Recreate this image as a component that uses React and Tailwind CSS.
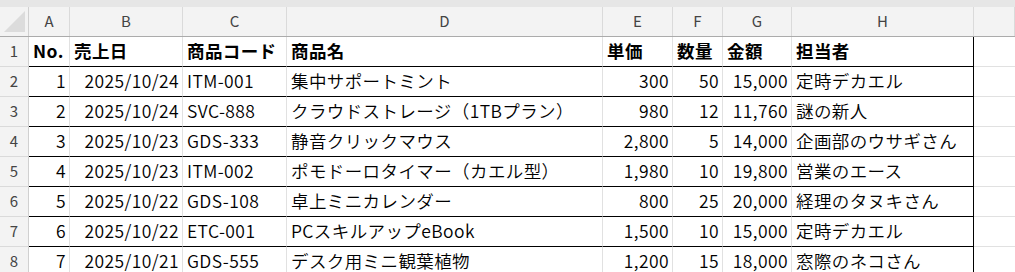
import React from "react";

const cols = ["A", "B", "C", "D", "E", "F", "G", "H", ""];

const header = ["No.", "売上日", "商品コード", "商品名", "単価", "数量", "金額", "担当者"];

// right-aligned columns for data rows
const numeric = [true, true, false, false, true, true, true, false];

const rows = [
  ["1", "2025/10/24", "ITM-001", "集中サポートミント", "300", "50", "15,000", "定時デカエル"],
  ["2", "2025/10/24", "SVC-888", "クラウドストレージ（1TBプラン）", "980", "12", "11,760", "謎の新人"],
  ["3", "2025/10/23", "GDS-333", "静音クリックマウス", "2,800", "5", "14,000", "企画部のウサギさん"],
  ["4", "2025/10/23", "ITM-002", "ポモドーロタイマー（カエル型）", "1,980", "10", "19,800", "営業のエース"],
  ["5", "2025/10/22", "GDS-108", "卓上ミニカレンダー", "800", "25", "20,000", "経理のタヌキさん"],
  ["6", "2025/10/22", "ETC-001", "PCスキルアップeBook", "1,500", "10", "15,000", "定時デカエル"],
  ["7", "2025/10/21", "GDS-555", "デスク用ミニ観葉植物", "1,200", "15", "18,000", "窓際のネコさん"],
];

const grid =
  "grid grid-cols-[29px_41px_113px_104px_316px_70px_50px_69px_182px_1fr]";

function RowHead({ n }) {
  return (
    <div className="h-[30px] flex items-center justify-center bg-[#f3f3f3] border-r border-r-[#d0d0d0] border-b border-b-[#dadada] text-[15px] text-[#444]">
      {n}
    </div>
  );
}

function Cell({ children, right, bold, last, edge }) {
  return (
    <div
      className={
        "h-[30px] flex items-center whitespace-nowrap overflow-hidden text-[17.5px] tracking-[0.4px] text-black " +
        (right ? "justify-end pr-[3px] " : "pl-[4px] ") +
        (bold ? "font-bold " : "font-[350] ") +
        (edge ? "border-r border-r-black " : "border-r border-r-[#e1e1e1] ") +
        (last ? "border-b border-b-[#e1e1e1]" : "border-b border-b-black")
      }
    >
      {children}
    </div>
  );
}

function Blank() {
  return <div className="h-[30px] border-b border-b-[#e1e1e1]" />;
}

export default function App() {
  return (
    <div
      className="w-[1015px] h-[272px] overflow-hidden bg-white"
      style={{ fontFamily: '"Noto Sans CJK JP", "Noto Sans", sans-serif' }}
    >
      <div className="h-[7px] bg-[#e6e6e6]" />
      <div className={grid + " h-[30px] bg-[#f3f3f3] border-b border-b-[#ababab]"}>
        <div className="relative border-r border-r-[#d0d0d0]">
          <svg className="absolute left-[4px] top-[4px]" width="22" height="21" viewBox="0 0 22 21">
            <polygon points="21,0 21,21 0,21" fill="#dcdcdc" />
          </svg>
        </div>
        {cols.map((c, i) => (
          <div
            key={i}
            className="flex items-center justify-center border-r border-r-[#dadada] text-[15px] text-[#444]"
          >
            {c}
          </div>
        ))}
      </div>
      <div className={grid}>
        <RowHead n={1} />
        {header.map((h, i) => (
          <Cell key={i} bold edge={i === 7}>
            {h}
          </Cell>
        ))}
        <Blank />
        {rows.map((r, ri) => (
          <React.Fragment key={ri}>
            <RowHead n={ri + 2} />
            {r.map((v, ci) => (
              <Cell key={ci} right={numeric[ci]} edge={ci === 7} last={ri === rows.length - 1}>
                {v}
              </Cell>
            ))}
            <Blank />
          </React.Fragment>
        ))}
      </div>
    </div>
  );
}
